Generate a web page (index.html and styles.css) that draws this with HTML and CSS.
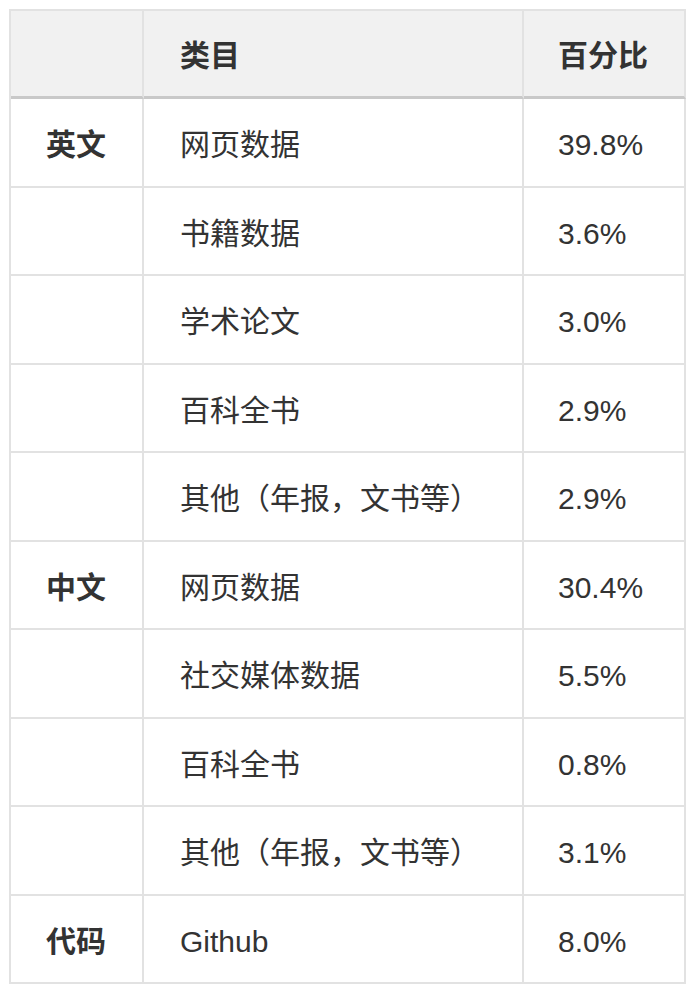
FILE: index.html
```html
<!DOCTYPE html>
<html lang="zh">
<head>
<meta charset="utf-8">
<title>数据构成</title>
<link rel="stylesheet" href="styles.css">
</head>
<body>
<table class="data">
  <thead>
    <tr>
      <th class="c1"></th>
      <th class="c2">类目</th>
      <th class="c3">百分比</th>
    </tr>
  </thead>
  <tbody>
    <tr><td class="c1 lang">英文</td><td class="c2">网页数据</td><td class="c3">39.8%</td></tr>
    <tr><td class="c1 lang"></td><td class="c2">书籍数据</td><td class="c3">3.6%</td></tr>
    <tr><td class="c1 lang"></td><td class="c2">学术论文</td><td class="c3">3.0%</td></tr>
    <tr><td class="c1 lang"></td><td class="c2">百科全书</td><td class="c3">2.9%</td></tr>
    <tr><td class="c1 lang"></td><td class="c2">其他（年报，文书等）</td><td class="c3">2.9%</td></tr>
    <tr><td class="c1 lang">中文</td><td class="c2">网页数据</td><td class="c3">30.4%</td></tr>
    <tr><td class="c1 lang"></td><td class="c2">社交媒体数据</td><td class="c3">5.5%</td></tr>
    <tr><td class="c1 lang"></td><td class="c2">百科全书</td><td class="c3">0.8%</td></tr>
    <tr><td class="c1 lang"></td><td class="c2">其他（年报，文书等）</td><td class="c3">3.1%</td></tr>
    <tr><td class="c1 lang">代码</td><td class="c2">Github</td><td class="c3">8.0%</td></tr>
  </tbody>
</table>
</body>
</html>
```
FILE: styles.css
```css
html, body {
  margin: 0;
  padding: 0;
  background: #ffffff;
}

body {
  font-family: "Liberation Sans", "Noto Sans CJK SC", sans-serif;
  font-size: 30px;
  color: #333333;
}

.data {
  margin: 9px 0 0 9px;
  width: 677px;
  border-collapse: separate;
  border-spacing: 0;
  border-top: 2px solid #e2e2e2;
  border-left: 2px solid #e2e2e2;
  table-layout: fixed;
  box-sizing: border-box;
}

.data th,
.data td {
  box-sizing: border-box;
  text-align: left;
  vertical-align: middle;
  line-height: 36.5px;
  padding: 28px 0 22px 35px;
  border-right: 2px solid #e2e2e2;
  border-bottom: 2px solid #e2e2e2;
  white-space: nowrap;
}

.data th {
  background: #f1f1f1;
  font-weight: bold;
  padding-top: 27.25px;
  padding-bottom: 21.25px;
  border-bottom: 3px solid #c9c9c9;
}

.data .c1 { width: 133px; }
.data .c2 { width: 380px; }
.data .c3 { width: 162px; }

.data th.c1, .data td.c1 { padding-left: 35px; }
.data th.c2, .data td.c2 { padding-left: 36px; }
.data th.c3, .data td.c3 { padding-left: 34px; }

.data .lang {
  font-weight: bold;
}
```
